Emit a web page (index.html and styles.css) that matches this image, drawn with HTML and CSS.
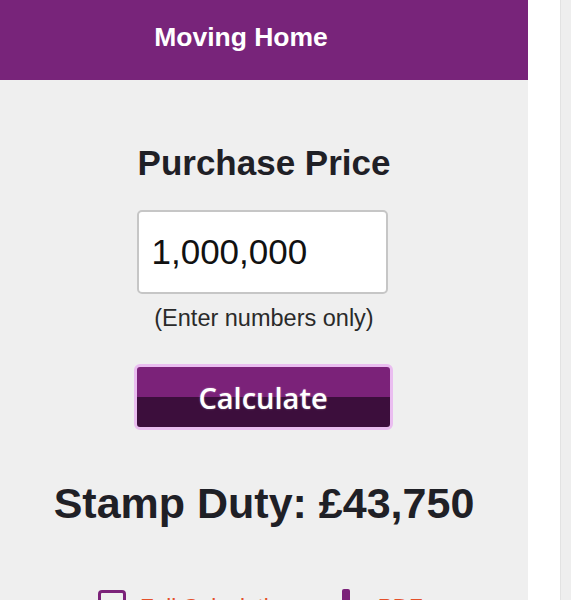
FILE: index.html
```html
<!DOCTYPE html>
<html lang="en">
<head>
    <meta charset="UTF-8">
    <meta name="viewport" content="width=device-width, initial-scale=1.0">
    <title>Moving Home - Stamp Duty Calculator</title>
    <link rel="stylesheet" href="styles.css">
</head>
<body>
    <div class="panel">
        <div class="header">Moving Home</div>
        <div class="content">
            <h2>Purchase Price</h2>
            <input class="price" type="text" value="1,000,000">
            <p class="hint">(Enter numbers only)</p>
            <button class="calculate">Calculate</button>
            <p class="result">Stamp Duty: £43,750</p>
            <div class="links">
                <a class="link" href="#"><span class="icon-box"></span><span class="link-text">Full Calculation</span></a>
                <a class="link" href="#"><span class="icon-bar"></span><span class="link-text">PDF</span></a>
            </div>
        </div>
    </div>
    <div class="gutter"></div>
    <div class="edge"></div>
</body>
</html>
```

FILE: styles.css
```css
body {
    margin: 0;
    display: flex;
    height: 600px;
    overflow: hidden;
    font-family: "Liberation Sans", Arial, sans-serif;
    background-color: #fff;
}
.panel {
    width: 528px;
    background-color: #efefef;
}
.gutter {
    width: 32px;
    background-color: #fff;
}
.edge {
    flex: 1;
    background-color: #eeeeee;
    border-left: 1px solid #e2e2e2;
}
.header {
    height: 80px;
    line-height: 74px;
    padding-right: 46px;
    background-color: #78247a;
    color: #fff;
    font-size: 26.5px;
    font-weight: bold;
    text-align: center;
}
.content {
    display: flex;
    flex-direction: column;
    align-items: center;
    color: #1f2026;
}
.content h2 {
    margin: 63px 0 0 0;
    font-size: 35px;
    line-height: 40px;
}
.price {
    margin: 27px 4px 0 0;
    width: 251px;
    height: 84px;
    box-sizing: border-box;
    border: 2px solid #c6c6c6;
    border-radius: 5px;
    background-color: #fff;
    padding: 0 0 0 13px;
    font-family: "Liberation Sans", Arial, sans-serif;
    font-size: 35px;
    color: #111;
    outline: none;
}
.hint {
    margin: 10px 0 0 0;
    font-size: 23.5px;
    line-height: 28px;
    color: #2a2a2a;
}
.calculate {
    margin: 32px 2px 0 0;
    width: 259px;
    height: 66px;
    border: 3px solid #eabdf0;
    border-radius: 6px;
    background: linear-gradient(#7b2279 0%, #7b2279 50%, #3c0e3c 50%, #3c0e3c 100%);
    color: #fff;
    font-family: "Open Sans", sans-serif;
    font-size: 29px;
    font-weight: 600;
    text-shadow: 0 0 2px rgba(255,255,255,0.4);
    cursor: pointer;
}
.result {
    margin: 48px 0 0 0;
    font-size: 43px;
    line-height: 50px;
    font-weight: bold;
}
.links {
    display: flex;
    gap: 48px;
    margin-top: 62px;
    align-self: flex-start;
    padding-left: 98px;
}
.link {
    display: flex;
    align-items: flex-start;
    gap: 14px;
    color: #e4502a;
    font-size: 22.5px;
    line-height: 26px;
    text-decoration: none;
}
.link-text {
    margin-top: 4px;
}
.icon-box {
    width: 28px;
    height: 28px;
    box-sizing: border-box;
    border: 3px solid #7b2279;
    border-radius: 4px;
}
.icon-bar {
    width: 8px;
    height: 28px;
    background-color: #7b2279;
    border-radius: 2px 2px 0 0;
    margin: -1px 14px 0 0;
}
```
